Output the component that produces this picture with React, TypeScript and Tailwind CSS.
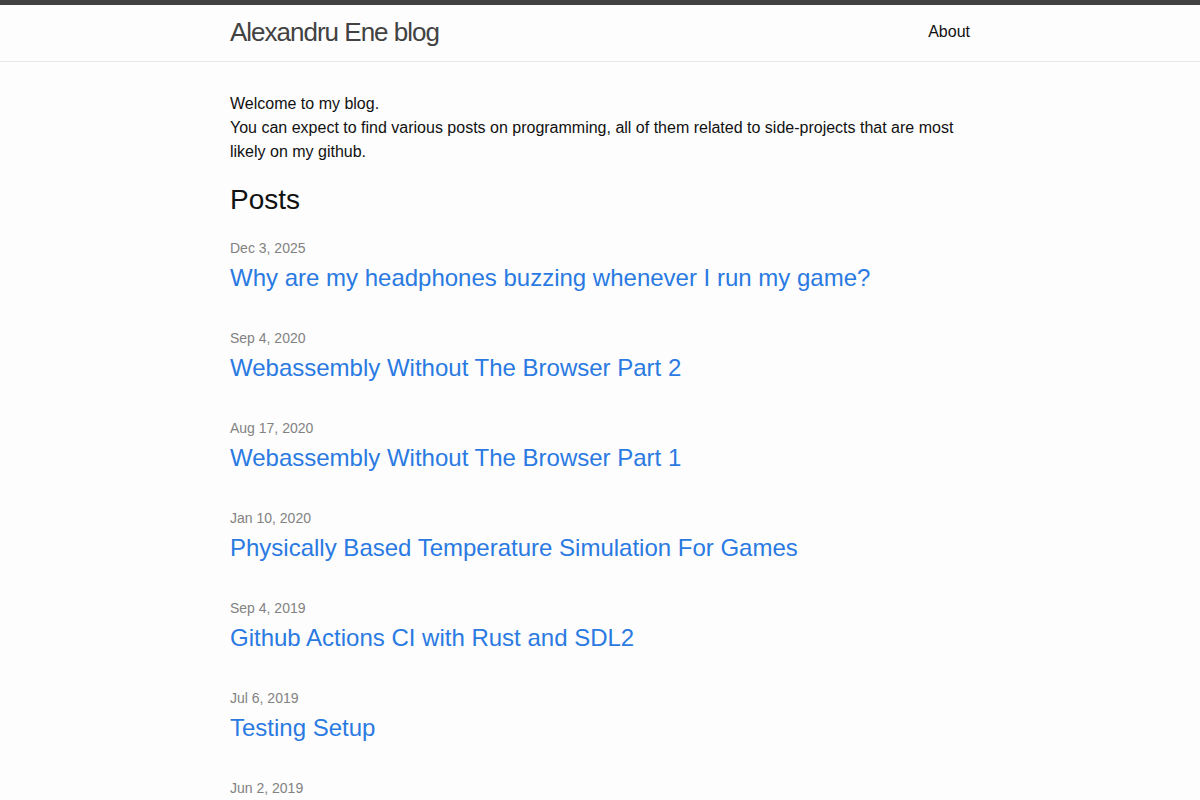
import React from "react";

const posts = [
  { date: "Dec 3, 2025", title: "Why are my headphones buzzing whenever I run my game?" },
  { date: "Sep 4, 2020", title: "Webassembly Without The Browser Part 2" },
  { date: "Aug 17, 2020", title: "Webassembly Without The Browser Part 1" },
  { date: "Jan 10, 2020", title: "Physically Based Temperature Simulation For Games" },
  { date: "Sep 4, 2019", title: "Github Actions CI with Rust and SDL2" },
  { date: "Jul 6, 2019", title: "Testing Setup" },
  { date: "Jun 2, 2019", title: "Rust Game Development Setup" },
];

export default function App() {
  return (
    <div className="min-h-screen bg-[#fdfdfd] text-[#111] text-base leading-6 font-['Liberation_Sans',Arial,sans-serif]">
      <header className="border-t-[5px] border-t-[#424242] border-b border-b-[#e8e8e8] min-h-[62px]">
        <div className="max-w-[800px] mx-auto px-[30px] flex justify-between items-center">
          <a href="#" className="text-[26px] font-light leading-[54px] tracking-[-1px] text-[#424242]">
            Alexandru Ene blog
          </a>
          <nav>
            <a href="#" className="leading-[54px] text-[#111]">
              About
            </a>
          </nav>
        </div>
      </header>

      <main className="py-[30px]">
        <div className="max-w-[800px] mx-auto px-[30px]">
          <p className="mb-[15px]">
            Welcome to my blog.
            <br />
            You can expect to find various posts on programming, all of them related to side-projects that are most likely on my github.
          </p>

          <h2 className="text-[28px] leading-[42px] mb-[15px]">Posts</h2>

          <ul>
            {posts.map((p) => (
              <li key={p.title} className="mb-[30px]">
                <span className="text-sm text-[#828282]">{p.date}</span>
                <h3 className="text-2xl leading-9">
                  <a href="#" className="text-[#2a7ae2]">
                    {p.title}
                  </a>
                </h3>
              </li>
            ))}
          </ul>
        </div>
      </main>
    </div>
  );
}
